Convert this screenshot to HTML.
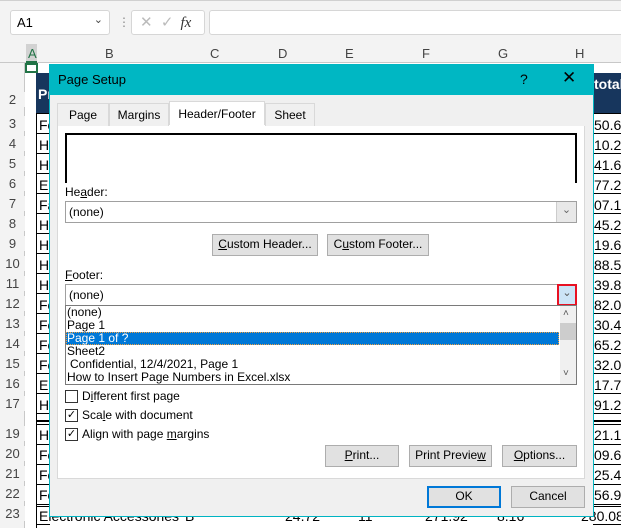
<!DOCTYPE html>
<html><head><meta charset="utf-8"><style>
*{box-sizing:border-box;margin:0;padding:0}
body{width:621px;height:528px;overflow:hidden;background:#fff;font-family:"Liberation Sans",sans-serif;position:relative;font-size:12px;color:#000}
.a{position:absolute}
.rh{position:absolute;left:0;width:25px;text-align:center;color:#444;font-size:13px;background:#f3f3f3}
.cell{position:absolute;font-size:14px;white-space:nowrap;overflow:hidden}
.btn{position:absolute;background:#e1e1e1;border:1px solid #adadad;text-align:center;font-size:12px;line-height:18px}
u{text-decoration:underline}
.cb{position:absolute;width:13px;height:13px;border:1px solid #333;background:#fff}
.lt{position:absolute;left:67px;font-size:12px;line-height:13px;white-space:nowrap}
.grid{position:absolute;background:repeating-linear-gradient(to bottom,#000 0,#000 1px,transparent 1px,transparent 20px)}
</style></head><body>
<div class="a" style="left:0;top:0;width:621px;height:44px;background:#f3f3f3;border-top:1px solid #d0d0d0"></div>
<div class="a" style="left:10px;top:10px;width:100px;height:25px;background:#fff;border:1px solid #d6d6d6;border-radius:3px;font-size:13px;padding:4px 6px">A1<span style="position:absolute;right:6px;top:2px;font-size:11px;color:#444">&#8964;</span></div>
<div class="a" style="left:118px;top:15px;color:#888;font-size:12px">&#8942;</div>
<div class="a" style="left:131px;top:10px;width:74px;height:25px;background:#fff;border:1px solid #d6d6d6;border-radius:3px;color:#bbb;font-size:15px;padding:2px 8px">&#10005;&nbsp;&nbsp;&#10003;<span style="color:#333;font-family:'Liberation Serif',serif;font-style:italic;font-size:15px;margin-left:7px">fx</span></div>
<div class="a" style="left:209px;top:10px;width:420px;height:25px;background:#fff;border:1px solid #d6d6d6;border-radius:3px"></div>
<div class="a" style="left:0;top:44px;width:621px;height:19px;background:#f3f3f3;border-bottom:1px solid #c8c8c8;font-size:13px;color:#444">
<span class="a" style="left:105px;top:2px">B</span>
<span class="a" style="left:210px;top:2px">C</span>
<span class="a" style="left:278px;top:2px">D</span>
<span class="a" style="left:345px;top:2px">E</span>
<span class="a" style="left:422px;top:2px">F</span>
<span class="a" style="left:498px;top:2px">G</span>
<span class="a" style="left:575px;top:2px">H</span>
</div>
<div class="a" style="left:26px;top:44px;width:11px;height:19px;background:#d2d2d2;border-bottom:2px solid #217346"></div>
<span class="a" style="left:28px;top:46px;color:#217346;font-size:13px">A</span>
<div class="a" style="left:25px;top:63px;width:13px;height:10px;border:2px solid #217346"></div>
<div class="a" style="left:0;top:63px;width:25px;height:465px;background:#f3f3f3;border-right:1px solid #c8c8c8"></div>
<div class="rh" style="top:92px">2</div>
<div class="rh" style="top:116px">3</div><div class="rh" style="top:136px">4</div><div class="rh" style="top:156px">5</div><div class="rh" style="top:176px">6</div><div class="rh" style="top:196px">7</div><div class="rh" style="top:216px">8</div><div class="rh" style="top:236px">9</div><div class="rh" style="top:256px">10</div><div class="rh" style="top:276px">11</div><div class="rh" style="top:296px">12</div><div class="rh" style="top:316px">13</div><div class="rh" style="top:336px">14</div><div class="rh" style="top:356px">15</div><div class="rh" style="top:376px">16</div><div class="rh" style="top:396px">17</div><div class="rh" style="top:426px">19</div><div class="rh" style="top:446px">20</div><div class="rh" style="top:466px">21</div><div class="rh" style="top:486px">22</div><div class="rh" style="top:506px">23</div>
<div class="grid" style="left:36px;top:113px;width:14px;height:301px"></div>
<div class="grid" style="left:36px;top:424px;width:14px;height:104px"></div>
<div class="grid" style="left:593px;top:113px;width:28px;height:301px"></div>
<div class="grid" style="left:593px;top:424px;width:28px;height:104px"></div>
<div class="a" style="left:36px;top:73px;width:20px;height:40px;background:#17365d"></div>
<div class="a" style="left:36px;top:113px;width:1px;height:415px;background:#000"></div>
<div class="cell" style="left:38px;top:86px;color:#fff;font-weight:bold">Pr</div>
<div class="cell" style="left:39px;top:117px">Fo</div><div class="cell" style="left:39px;top:137px">H</div><div class="cell" style="left:39px;top:157px">H</div><div class="cell" style="left:39px;top:177px">El</div><div class="cell" style="left:39px;top:197px">Fa</div><div class="cell" style="left:39px;top:217px">H</div><div class="cell" style="left:39px;top:237px">H</div><div class="cell" style="left:39px;top:257px">H</div><div class="cell" style="left:39px;top:277px">H</div><div class="cell" style="left:39px;top:297px">Fo</div><div class="cell" style="left:39px;top:317px">Fo</div><div class="cell" style="left:39px;top:337px">Fo</div><div class="cell" style="left:39px;top:357px">Fo</div><div class="cell" style="left:39px;top:377px">El</div><div class="cell" style="left:39px;top:397px">H</div><div class="cell" style="left:39px;top:427px">H</div><div class="cell" style="left:39px;top:447px">Fo</div><div class="cell" style="left:39px;top:467px">Fo</div><div class="cell" style="left:39px;top:487px">Fo</div>
<div class="a" style="left:36px;top:420px;width:585px;height:2px;background:#000"></div>
<div class="a" style="left:593px;top:73px;width:28px;height:40px;background:#17365d"></div>
<div class="cell" style="left:594px;top:76px;color:#fff;font-weight:bold">total</div>
<div class="cell" style="left:594px;top:117px">50.63</div><div class="cell" style="left:594px;top:137px">10.28</div><div class="cell" style="left:594px;top:157px">41.65</div><div class="cell" style="left:594px;top:177px">77.24</div><div class="cell" style="left:594px;top:197px">07.15</div><div class="cell" style="left:594px;top:217px">45.28</div><div class="cell" style="left:594px;top:237px">19.69</div><div class="cell" style="left:594px;top:257px">88.54</div><div class="cell" style="left:594px;top:277px">39.88</div><div class="cell" style="left:594px;top:297px">82.02</div><div class="cell" style="left:594px;top:317px">30.41</div><div class="cell" style="left:594px;top:337px">65.20</div><div class="cell" style="left:594px;top:357px">32.06</div><div class="cell" style="left:594px;top:377px">17.75</div><div class="cell" style="left:594px;top:397px">91.26</div><div class="cell" style="left:594px;top:427px">21.17</div><div class="cell" style="left:594px;top:447px">09.62</div><div class="cell" style="left:594px;top:467px">25.43</div><div class="cell" style="left:594px;top:487px">56.91</div>
<div class="a" style="left:36px;top:506px;width:585px;height:1px;background:#000"></div>
<div class="cell" style="left:39px;top:508px">Electronic Accessories</div>
<div class="cell" style="left:185px;top:508px">B</div>
<div class="cell" style="left:285px;top:508px">24.72</div>
<div class="cell" style="left:358px;top:508px">11</div>
<div class="cell" style="left:425px;top:508px">271.92</div>
<div class="cell" style="left:497px;top:508px">8.16</div>
<div class="cell" style="left:581px;top:508px">280.08</div>
<div class="a" style="left:49px;top:64px;width:545px;height:453px;background:#f0f0f0;border:1px solid #00b4c2"></div>
<div class="a" style="left:49px;top:64px;width:545px;height:31px;background:#00b7c3"></div>
<div class="a" style="left:58px;top:72px;font-size:13px">Page Setup</div>
<div class="a" style="left:520px;top:71px;font-size:14px">?</div>
<div class="a" style="left:562px;top:68px;font-size:17px">&#10005;</div>
<div class="a" style="left:57px;top:103px;width:52px;height:23px;border:1px solid #d9d9d9;border-bottom:none;background:#f0f0f0;font-size:12px;text-align:center;line-height:22px">Page</div>
<div class="a" style="left:109px;top:103px;width:60px;height:23px;border:1px solid #d9d9d9;border-bottom:none;font-size:12px;text-align:center;line-height:22px">Margins</div>
<div class="a" style="left:169px;top:101px;width:96px;height:26px;border:1px solid #d9d9d9;border-bottom:none;background:#fff;font-size:12px;text-align:center;line-height:24px">Header/Footer</div>
<div class="a" style="left:265px;top:103px;width:50px;height:23px;border:1px solid #d9d9d9;border-bottom:none;font-size:12px;text-align:center;line-height:22px">Sheet</div>
<div class="a" style="left:57px;top:126px;width:528px;height:353px;background:#fff;border:1px solid #d9d9d9;border-top:none"></div>
<div class="a" style="left:169px;top:125px;width:96px;height:3px;background:#fff"></div>
<div class="a" style="left:65px;top:133px;width:512px;height:50px;border:2px solid #000;border-bottom:none"></div>
<div class="a" style="left:65px;top:185px">He<u>a</u>der:</div>
<div class="a" style="left:65px;top:201px;width:512px;height:22px;border:1px solid #a0a0a0;background:#fff;padding:3px 3px">(none)</div>
<div class="a" style="left:556px;top:202px;width:20px;height:20px;background:#e8e8e8;border-left:1px solid #ccc;color:#666;text-align:center;font-size:11px;line-height:16px">&#8964;</div>
<div class="btn" style="left:212px;top:234px;width:106px;height:22px"><u>C</u>ustom Header...</div>
<div class="btn" style="left:327px;top:234px;width:102px;height:22px">C<u>u</u>stom Footer...</div>
<div class="a" style="left:65px;top:268px"><u>F</u>ooter:</div>
<div class="a" style="left:65px;top:284px;width:512px;height:22px;border:1px solid #a0a0a0;background:#fff;padding:3px 3px">(none)</div>
<div class="a" style="left:557px;top:284px;width:20px;height:22px;background:#cce4f7;border:2px solid #e81123;color:#555;text-align:center;font-size:11px;line-height:15px">&#8964;</div>
<div class="a" style="left:65px;top:305px;width:512px;height:80px;border:1px solid #7a7a7a;background:#fff"></div>
<div class="lt" style="top:306px">(none)</div>
<div class="lt" style="top:319px">Page 1</div>
<div class="a" style="left:66px;top:332px;width:493px;height:13px;background:#0078d7;border:1px dotted #f0a040"></div>
<div class="lt" style="top:332px;color:#fff">Page 1 of ?</div>
<div class="lt" style="top:345px">Sheet2</div>
<div class="lt" style="top:358px;left:70px">Confidential, 12/4/2021, Page 1</div>
<div class="lt" style="top:371px">How to Insert Page Numbers in Excel.xlsx</div>
<div class="a" style="left:560px;top:306px;width:16px;height:78px;background:#f0f0f0"></div>
<div class="a" style="left:560px;top:323px;width:16px;height:17px;background:#cdcdcd"></div>
<div class="a" style="left:563px;top:308px;font-size:10px;color:#555">&#708;</div>
<div class="a" style="left:563px;top:368px;font-size:10px;color:#555">&#709;</div>
<div class="cb" style="left:65px;top:390px"></div><div class="a" style="left:82px;top:389px">D<u>i</u>fferent first page</div>
<div class="cb" style="left:65px;top:409px;font-size:11px;line-height:11px;text-align:center">&#10003;</div><div class="a" style="left:82px;top:408px">Sca<u>l</u>e with document</div>
<div class="cb" style="left:65px;top:428px;font-size:11px;line-height:11px;text-align:center">&#10003;</div><div class="a" style="left:82px;top:427px">Align with page <u>m</u>argins</div>
<div class="btn" style="left:325px;top:445px;width:74px;height:22px"><u>P</u>rint...</div>
<div class="btn" style="left:409px;top:445px;width:83px;height:22px">Print Previe<u>w</u></div>
<div class="btn" style="left:502px;top:445px;width:75px;height:22px"><u>O</u>ptions...</div>
<div class="btn" style="left:427px;top:486px;width:74px;height:22px;border:2px solid #0078d7;line-height:17px">OK</div>
<div class="btn" style="left:511px;top:486px;width:74px;height:22px">Cancel</div>
</body></html>
